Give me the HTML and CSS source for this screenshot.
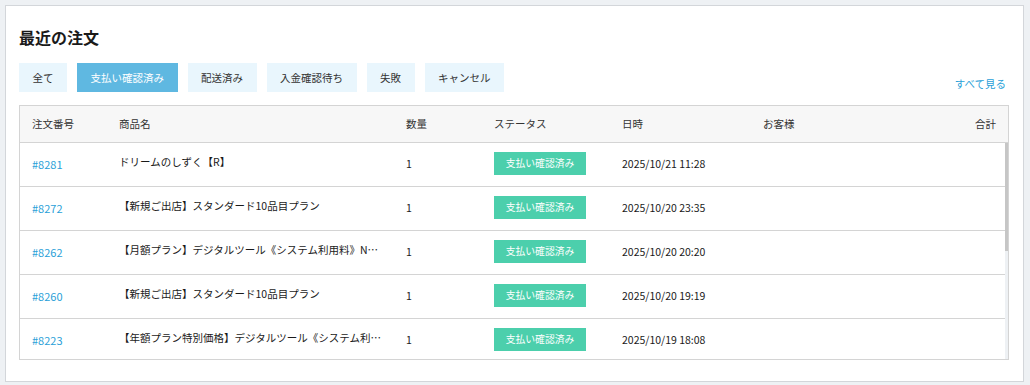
FILE: index.html
```html
<!DOCTYPE html>
<html lang="ja">
<head>
  <meta charset="UTF-8" />
  <meta name="viewport" content="width=device-width, initial-scale=1.0"/>
  <title>最近の注文</title>
  <link rel="stylesheet" href="styles.css">
</head>
<body>
  <div class="card">
    <div class="card-title">最近の注文</div>

    <div class="toolbar">
      <div class="filters">
        <button class="filter">全て</button>
        <button class="filter active">支払い確認済み</button>
        <button class="filter">配送済み</button>
        <button class="filter">入金確認待ち</button>
        <button class="filter">失敗</button>
        <button class="filter">キャンセル</button>
      </div>
      <a class="see-all" href="#">すべて見る</a>
    </div>

    <div class="orders">
      <div class="row head">
        <div class="cell">注文番号</div>
        <div class="cell">商品名</div>
        <div class="cell">数量</div>
        <div class="cell">ステータス</div>
        <div class="cell">日時</div>
        <div class="cell">お客様</div>
        <div class="cell total">合計</div>
      </div>
      <div class="orders-body">
        <div class="orders-rows">
          <div class="row">
            <div class="cell"><a class="order-no" href="#">#8281</a></div>
            <div class="cell product">ドリームのしずく【R】</div>
            <div class="cell">1</div>
            <div class="cell"><span class="badge">支払い確認済み</span></div>
            <div class="cell">2025/10/21 11:28</div>
            <div class="cell"></div>
            <div class="cell total"></div>
          </div>
          <div class="row">
            <div class="cell"><a class="order-no" href="#">#8272</a></div>
            <div class="cell product">【新規ご出店】スタンダード10品目プラン</div>
            <div class="cell">1</div>
            <div class="cell"><span class="badge">支払い確認済み</span></div>
            <div class="cell">2025/10/20 23:35</div>
            <div class="cell"></div>
            <div class="cell total"></div>
          </div>
          <div class="row">
            <div class="cell"><a class="order-no" href="#">#8262</a></div>
            <div class="cell product">【月額プラン】デジタルツール《システム利用料》NPO法人向け</div>
            <div class="cell">1</div>
            <div class="cell"><span class="badge">支払い確認済み</span></div>
            <div class="cell">2025/10/20 20:20</div>
            <div class="cell"></div>
            <div class="cell total"></div>
          </div>
          <div class="row">
            <div class="cell"><a class="order-no" href="#">#8260</a></div>
            <div class="cell product">【新規ご出店】スタンダード10品目プラン</div>
            <div class="cell">1</div>
            <div class="cell"><span class="badge">支払い確認済み</span></div>
            <div class="cell">2025/10/20 19:19</div>
            <div class="cell"></div>
            <div class="cell total"></div>
          </div>
          <div class="row">
            <div class="cell"><a class="order-no" href="#">#8223</a></div>
            <div class="cell product">【年額プラン特別価格】デジタルツール《システム利用料》</div>
            <div class="cell">1</div>
            <div class="cell"><span class="badge">支払い確認済み</span></div>
            <div class="cell">2025/10/19 18:08</div>
            <div class="cell"></div>
            <div class="cell total"></div>
          </div>
        </div>
        <div class="scroll-track"><div class="scroll-thumb"></div></div>
      </div>
    </div>
  </div>
</body>
</html>
```

FILE: styles.css
```css
html, body {
  margin: 0;
  padding: 0;
  background: #eef1f4;
  font-family: "Noto Sans CJK JP", "Noto Sans", sans-serif;
  color: #1a1a1a;
}
body {
  padding: 5px 6px 0 5px;
}
.card {
  background: white;
  border: 1px solid #d3d6da;
  padding: 19px 14px 21px 13px;
}
.card-title {
  font-size: 16px;
  font-weight: bold;
  line-height: 24px;
  color: #1a1a1a;
  margin-bottom: 14px;
}
.toolbar {
  display: flex;
  justify-content: space-between;
  align-items: flex-end;
  margin-bottom: 13px;
}
.filters {
  display: flex;
  gap: 10px;
}
.filter {
  height: 29px;
  padding: 0 13.5px;
  border: none;
  background: #e9f6fd;
  color: #333;
  font-family: inherit;
  font-size: 10.5px;
  cursor: pointer;
}
.filter.active {
  background: #5fb8e1;
  color: white;
}
.see-all {
  font-size: 10.5px;
  line-height: 16px;
  color: #2a9fd8;
  text-decoration: none;
  margin-right: 3px;
}
.orders {
  border: 1px solid #d4d4d4;
}
.row {
  display: grid;
  grid-template-columns: 87px 287px 88px 128px 141px 1fr 100px;
  align-items: center;
  box-sizing: border-box;
  height: 44px;
  padding-bottom: 2px;
  border-bottom: 1px solid #d4d4d4;
  font-size: 10.5px;
}
.row.head {
  height: 37px;
  background: #f7f7f7;
  color: #333;
}
.cell {
  padding: 0 12px;
  white-space: nowrap;
}
.cell.total {
  text-align: right;
}
.cell.product {
  overflow: hidden;
  text-overflow: ellipsis;
  margin-bottom: 4px;
}
.orders-body {
  display: flex;
  height: 216px;
  overflow: hidden;
}
.orders-rows {
  flex: 1;
  min-width: 0;
}
.scroll-track {
  width: 3px;
  background: #eef1f4;
}
.scroll-thumb {
  height: 108px;
  background: #c6c6c6;
}
.order-no {
  color: #2a9fd8;
  text-decoration: none;
  font-size: 11px;
}
.badge {
  display: inline-block;
  width: 92px;
  height: 23px;
  line-height: 23px;
  text-align: center;
  background: #4ccfac;
  color: white;
  font-size: 9.8px;
}
```
